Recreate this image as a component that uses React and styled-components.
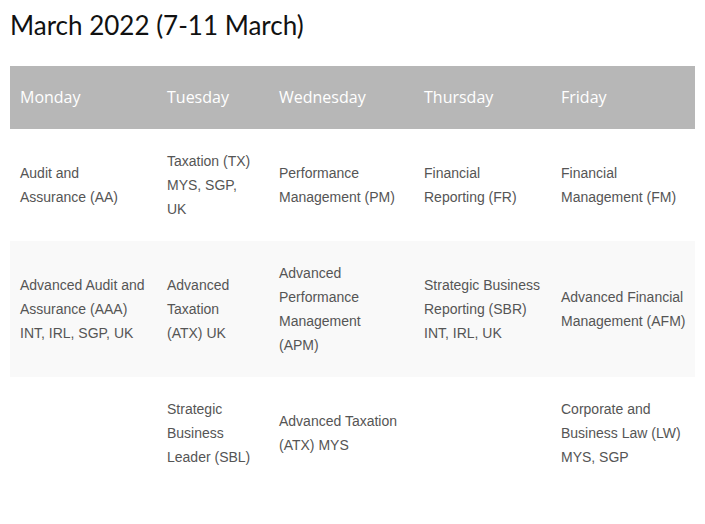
import React from "react";
import styled, { createGlobalStyle } from "styled-components";

const GlobalStyle = createGlobalStyle`
  body {
    margin: 0;
    background: #fff;
  }
`;

const Page = styled.div`
  padding: 0 10px;
`;

const Title = styled.h2`
  margin: 0;
  padding-top: 8px;
  height: 66px;
  box-sizing: border-box;
  font-family: "Lato", "Open Sans", sans-serif;
  font-weight: 400;
  font-size: 26px;
  line-height: 34px;
  color: #111;
`;

const columns = "147px 112px 145px 137px 145px";

const HeadRow = styled.div`
  display: grid;
  grid-template-columns: ${columns};
  background: #b7b7b7;
`;

const HeadCell = styled.div`
  padding: 20px 10px;
  font-family: "Open Sans", sans-serif;
  font-size: 16px;
  line-height: 23px;
  color: #fff;
`;

const Row = styled.div`
  display: grid;
  grid-template-columns: ${columns};
  align-items: center;
  background: ${(p) => (p.$shaded ? "#f9f9f9" : "#fff")};
`;

const Cell = styled.div`
  padding: 20px ${(p) => (p.$narrow ? "14px" : "10px")} 20px 10px;
  font-family: "Liberation Sans", Arial, sans-serif;
  font-size: 14px;
  line-height: 24px;
  color: #555;
`;

const days = ["Monday", "Tuesday", "Wednesday", "Thursday", "Friday"];

const rows = [
  [
    "Audit and Assurance (AA)",
    "Taxation (TX) MYS, SGP, UK",
    "Performance Management (PM)",
    "Financial Reporting (FR)",
    "Financial Management (FM)",
  ],
  [
    "Advanced Audit and Assurance (AAA) INT, IRL, SGP, UK",
    "Advanced Taxation (ATX) UK",
    "Advanced Performance Management (APM)",
    "Strategic Business Reporting (SBR) INT, IRL, UK",
    "Advanced Financial Management (AFM)",
  ],
  [
    "",
    "Strategic Business Leader (SBL)",
    "Advanced Taxation (ATX) MYS",
    "",
    "Corporate and Business Law (LW) MYS, SGP",
  ],
];

export default function App() {
  return (
    <Page>
      <GlobalStyle />
      <Title>March 2022 (7-11 March)</Title>
      <HeadRow>
        {days.map((d) => (
          <HeadCell key={d}>{d}</HeadCell>
        ))}
      </HeadRow>
      {rows.map((r, i) => (
        <Row key={i} $shaded={i % 2 === 1}>
          {r.map((c, j) => (
            <Cell key={j} $narrow={j === 1}>
              {c}
            </Cell>
          ))}
        </Row>
      ))}
    </Page>
  );
}
